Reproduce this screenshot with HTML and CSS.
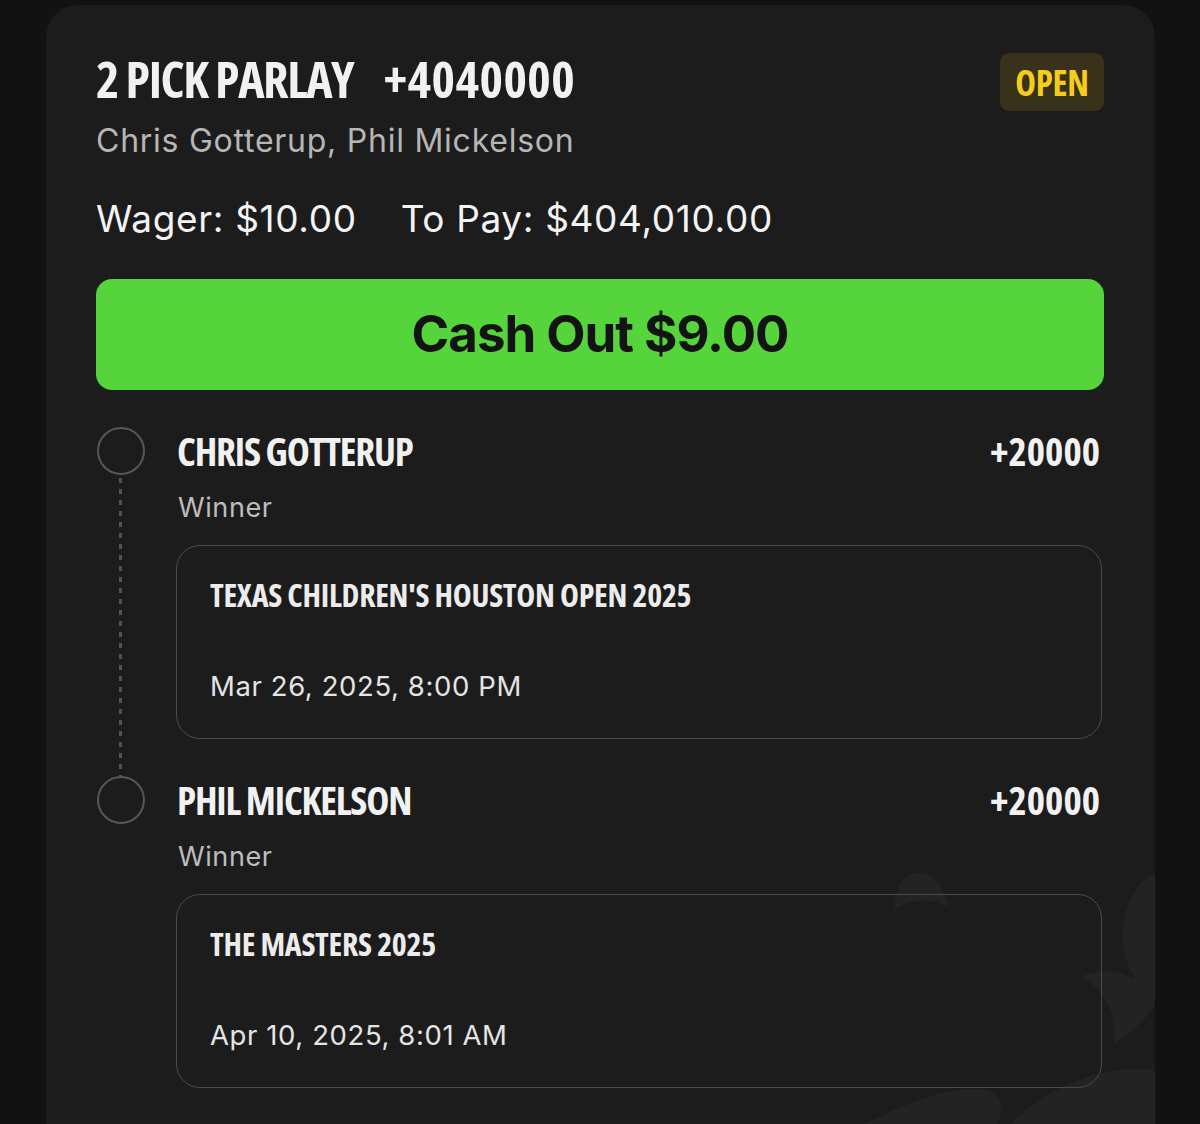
FILE: index.html
```html
<!DOCTYPE html>
<html lang="en">
<head>
<meta charset="utf-8">
<title>2 Pick Parlay</title>
<link rel="stylesheet" href="styles.css">
</head>
<body>
<main class="card">
  <svg class="watermark" width="300" height="290" viewBox="0 0 300 290" aria-hidden="true">
    <path d="M40 62 C46 22 80 30 88 52 L94 68 C75 58 55 60 40 70 Z" />
    <path d="M300 35 C285 40 270 60 268 90 C266 110 272 125 280 140 C260 130 240 130 226 138 C250 150 262 175 258 205 C275 195 292 180 300 165 Z" />
    <path d="M0 290 C40 270 80 250 120 250 C150 250 150 270 140 290 Z" />
    <path d="M150 290 C190 250 240 228 290 230 L300 232 L300 290 Z" />
  </svg>

  <header class="head">
    <div class="head-main">
      <h1 class="title"><span class="title-text">2 PICK PARLAY</span><span class="title-odds">+4040000</span></h1>
      <p class="players">Chris Gotterup, Phil Mickelson</p>
    </div>
    <span class="badge">OPEN</span>
  </header>

  <div class="amounts">
    <span>Wager: $10.00</span>
    <span>To Pay: $404,010.00</span>
  </div>

  <button class="cashout">Cash Out $9.00</button>

  <ol class="legs">
    <li class="leg">
      <div class="rail"><span class="dot"></span><span class="line"></span></div>
      <div class="leg-body">
        <div class="leg-top"><span class="leg-name">CHRIS GOTTERUP</span><span class="leg-odds">+20000</span></div>
        <div class="leg-market">Winner</div>
        <div class="event">
          <div class="event-name">TEXAS CHILDREN'S HOUSTON OPEN 2025</div>
          <div class="event-date">Mar 26, 2025, 8:00 PM</div>
        </div>
      </div>
    </li>
    <li class="leg">
      <div class="rail"><span class="dot"></span></div>
      <div class="leg-body">
        <div class="leg-top"><span class="leg-name">PHIL MICKELSON</span><span class="leg-odds">+20000</span></div>
        <div class="leg-market">Winner</div>
        <div class="event">
          <div class="event-name">THE MASTERS 2025</div>
          <div class="event-date">Apr 10, 2025, 8:01 AM</div>
        </div>
      </div>
    </li>
  </ol>
</main>
</body>
</html>
```
FILE: styles.css
```css
* { box-sizing: border-box; }
html, body { height: 100%; }
body {
  margin: 0;
  background: #121212;
  padding: 5px 45px 0 46px;
  overflow: hidden;
  font-family: Inter, "Noto Sans", sans-serif;
}
.card {
  position: relative;
  background: #1c1c1c;
  border-radius: 32px 32px 0 0;
  padding: 44px 51px 0 50px;
  height: calc(100vh - 5px);
  overflow: hidden;
}
.watermark {
  position: absolute;
  right: 0;
  top: 834px;
  fill: #232323;
}
.head, .amounts, .cashout, .legs { position: relative; }

.head {
  display: flex;
  justify-content: space-between;
  align-items: flex-start;
}
.title {
  margin: 0;
  display: flex;
  gap: 30px;
  font-family: "Open Sans", sans-serif;
  font-stretch: 75%;
  font-weight: 700;
  font-size: 50px;
  line-height: 60px;
  color: #f1f1f1;
}
.title-text { letter-spacing: -1.4px; }
.title-odds { letter-spacing: 0.5px; }
.players {
  margin: 12px 0 0;
  font-size: 32px;
  line-height: 40px;
  letter-spacing: 0.75px;
  color: #b6b6b6;
}
.badge {
  margin-top: 4px;
  width: 104px;
  height: 58px;
  border-radius: 9px;
  background: #38321a;
  color: #f6cd1c;
  display: flex;
  align-items: center;
  justify-content: center;
  font-family: "Open Sans", sans-serif;
  font-stretch: 75%;
  font-weight: 700;
  font-size: 35px;
  letter-spacing: -0.3px;
}
.amounts {
  margin-top: 35px;
  display: flex;
  gap: 44px;
  font-size: 37px;
  line-height: 46px;
  letter-spacing: 0.65px;
  color: #f3f3f3;
}
.cashout {
  display: flex;
  align-items: center;
  justify-content: center;
  width: 100%;
  height: 111px;
  margin-top: 37px;
  border: 0;
  border-radius: 16px;
  background: #55d53b;
  color: #131313;
  font-family: Inter, sans-serif;
  font-weight: 700;
  font-size: 51px;
  letter-spacing: -1px;
  padding: 0 0 2px;
}
.legs {
  list-style: none;
  margin: 37px 0 0;
  padding: 0;
}
.leg {
  display: grid;
  grid-template-columns: 80px 1fr;
  padding-bottom: 37px;
}
.rail {
  display: flex;
  flex-direction: column;
  align-items: center;
  width: 49px;
}
.dot {
  width: 48px;
  height: 48px;
  border: 2.5px solid #575757;
  border-radius: 50%;
  flex: none;
}
.line {
  flex: 1;
  width: 3px;
  margin-top: 3px;
  margin-bottom: -39px;
  background: repeating-linear-gradient(to bottom, #525252 0 5px, transparent 5px 11px);
}
.leg-body { min-width: 0; }
.leg-top {
  display: flex;
  justify-content: space-between;
  font-family: "Open Sans", sans-serif;
  font-stretch: 75%;
  font-weight: 700;
  font-size: 39px;
  line-height: 48px;
  color: #f1f1f1;
  padding-right: 4px;
}
.leg-name { letter-spacing: -1.2px; padding-left: 1px; }
.leg-odds { letter-spacing: 0; }
.leg-market {
  margin-top: 16px;
  font-size: 27px;
  line-height: 34px;
  letter-spacing: 0.6px;
  color: #bdbdbd;
  padding-left: 2px;
}
.event {
  margin-top: 20px;
  margin-right: 2px;
  border: 1.5px solid #4a4a4a;
  border-radius: 24px;
  padding: 29px 33px 35px;
}
.event-name {
  font-family: "Open Sans", sans-serif;
  font-stretch: 75%;
  font-weight: 700;
  font-size: 32px;
  line-height: 40px;
  letter-spacing: -0.3px;
  color: #ececec;
}
.event-date {
  margin-top: 54px;
  font-size: 27.5px;
  line-height: 34px;
  letter-spacing: 0.6px;
  color: #e4e4e4;
}
```
